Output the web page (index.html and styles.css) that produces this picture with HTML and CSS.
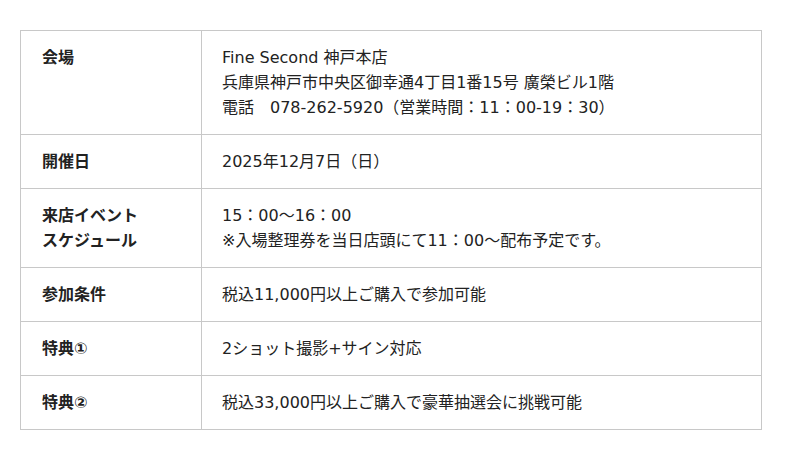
FILE: index.html
```html
<!DOCTYPE html>
<html lang="ja">
<head>
<meta charset="utf-8">
<link rel="stylesheet" href="styles.css">
</head>
<body>
<table class="info">
  <tr>
    <th>会場</th>
    <td>Fine Second 神戸本店<br>兵庫県神戸市中央区御幸通4丁目1番15号 廣榮ビル1階<br>電話　078-262-5920（営業時間：11：00-19：30）</td>
  </tr>
  <tr>
    <th>開催日</th>
    <td>2025年12月7日（日）</td>
  </tr>
  <tr>
    <th>来店イベント<br>スケジュール</th>
    <td>15：00～16：00<br>※入場整理券を当日店頭にて11：00～配布予定です。</td>
  </tr>
  <tr>
    <th>参加条件</th>
    <td>税込11,000円以上ご購入で参加可能</td>
  </tr>
  <tr>
    <th>特典①</th>
    <td>2ショット撮影+サイン対応</td>
  </tr>
  <tr>
    <th>特典②</th>
    <td>税込33,000円以上ご購入で豪華抽選会に挑戦可能</td>
  </tr>
</table>
</body>
</html>
```
FILE: styles.css
```css
html, body {
  margin: 0;
  padding: 0;
  background: #fff;
}
body {
  padding: 30px 20px;
  font-family: "DejaVu Sans", "Noto Sans CJK JP", sans-serif;
  font-size: 16px;
  line-height: 25px;
  color: #222;
}
.info {
  width: 742px;
  border-collapse: collapse;
  border: 1px solid #ddd;
}
.info th,
.info td {
  border: 1px solid #c8c8c8;
  padding: 14px 20px;
  text-align: left;
  vertical-align: top;
}
.info th {
  width: 139px;
  font-weight: bold;
  padding-left: 21px;
}
```
